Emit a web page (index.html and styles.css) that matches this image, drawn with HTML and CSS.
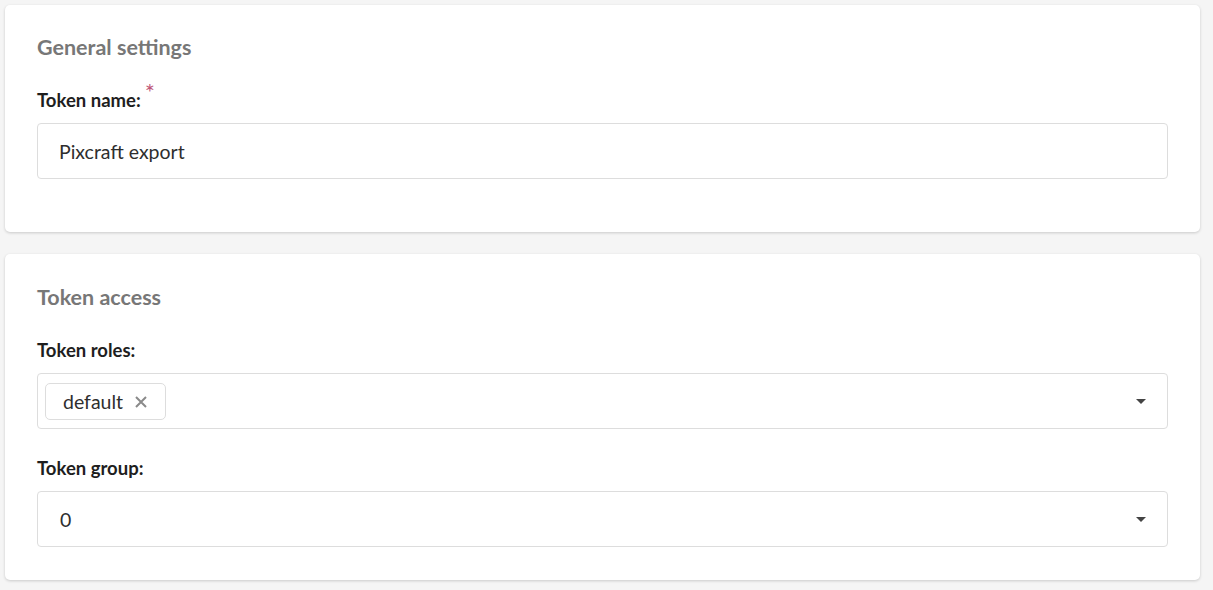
FILE: index.html
```html
<!DOCTYPE html>
<html lang="en">
<head>
<meta charset="utf-8">
<title>Token settings</title>
<link rel="stylesheet" href="styles.css">
</head>
<body>
<main class="page">
  <section class="card card--first">
    <h2 class="card-title">General settings</h2>
    <div class="field">
      <label class="field-label">Token name:<sup class="req">*</sup></label>
      <div class="control">Pixcraft export</div>
    </div>
  </section>
  <section class="card card--second">
    <h2 class="card-title">Token access</h2>
    <div class="field">
      <label class="field-label">Token roles:</label>
      <div class="control control--select control--chips">
        <span class="chip">default
          <svg class="chip-x" width="12" height="12" viewBox="0 0 12 12" aria-hidden="true"><path d="M1 1 L11 11 M11 1 L1 11" stroke="#8a8a8a" stroke-width="2" fill="none"/></svg>
        </span>
        <span class="caret"></span>
      </div>
    </div>
    <div class="field">
      <label class="field-label">Token group:</label>
      <div class="control control--select">
        <span class="value">0</span>
        <span class="caret"></span>
      </div>
    </div>
  </section>
</main>
</body>
</html>
```
FILE: styles.css
```css
* { box-sizing: border-box; }
html, body { margin: 0; padding: 0; }
body {
  background: #f5f5f5;
  font-family: Lato, "Open Sans", sans-serif;
  color: #222;
  width: 1213px;
  height: 590px;
  overflow: hidden;
}
.page {
  padding: 5px 13px 0 5px;
  display: flex;
  flex-direction: column;
  gap: 22px;
}
.card {
  background: #fff;
  border-radius: 5px;
  box-shadow: 0 1px 3px rgba(0,0,0,0.18);
  padding: 30px 32px 53px 32px;
  display: flex;
  flex-direction: column;
}
.card--second { padding-top: 31px; padding-bottom: 33px; }
.card-title {
  margin: 0 0 29px 0;
  font-size: 21.5px;
  line-height: 24px;
  font-weight: 700;
  color: #777;
}
.field { display: flex; flex-direction: column; }
.field + .field { margin-top: 27px; }
.field-label {
  font-size: 18.5px;
  line-height: 24px;
  font-weight: 700;
  color: #1e1e1e;
  margin-bottom: 11px;
}
.req {
  color: #c0587a;
  font-size: 24px;
  line-height: 0;
  margin-left: 4px;
  font-weight: 400;
  position: relative;
  top: 1px;
}
.control {
  height: 56px;
  border: 1px solid #ddd;
  border-radius: 4px;
  padding: 0 21px;
  display: flex;
  align-items: center;
  font-size: 19.5px;
  color: #2e2e2e;
}
.control--select { justify-content: space-between; padding-right: 21px; }
.control--chips { padding-left: 7px; }
.chip {
  height: 37px;
  border: 1px solid #ddd;
  border-radius: 5px;
  display: flex;
  align-items: center;
  padding: 0 18px 0 17px;
  gap: 12px;
  font-size: 19.5px;
  color: #2e2e2e;
}
.chip-x { display: block; margin-top: 1px; }
.caret {
  width: 0; height: 0;
  border-left: 5px solid transparent;
  border-right: 5px solid transparent;
  border-top: 5px solid #444;
}
.value { padding-left: 1px; }
```
